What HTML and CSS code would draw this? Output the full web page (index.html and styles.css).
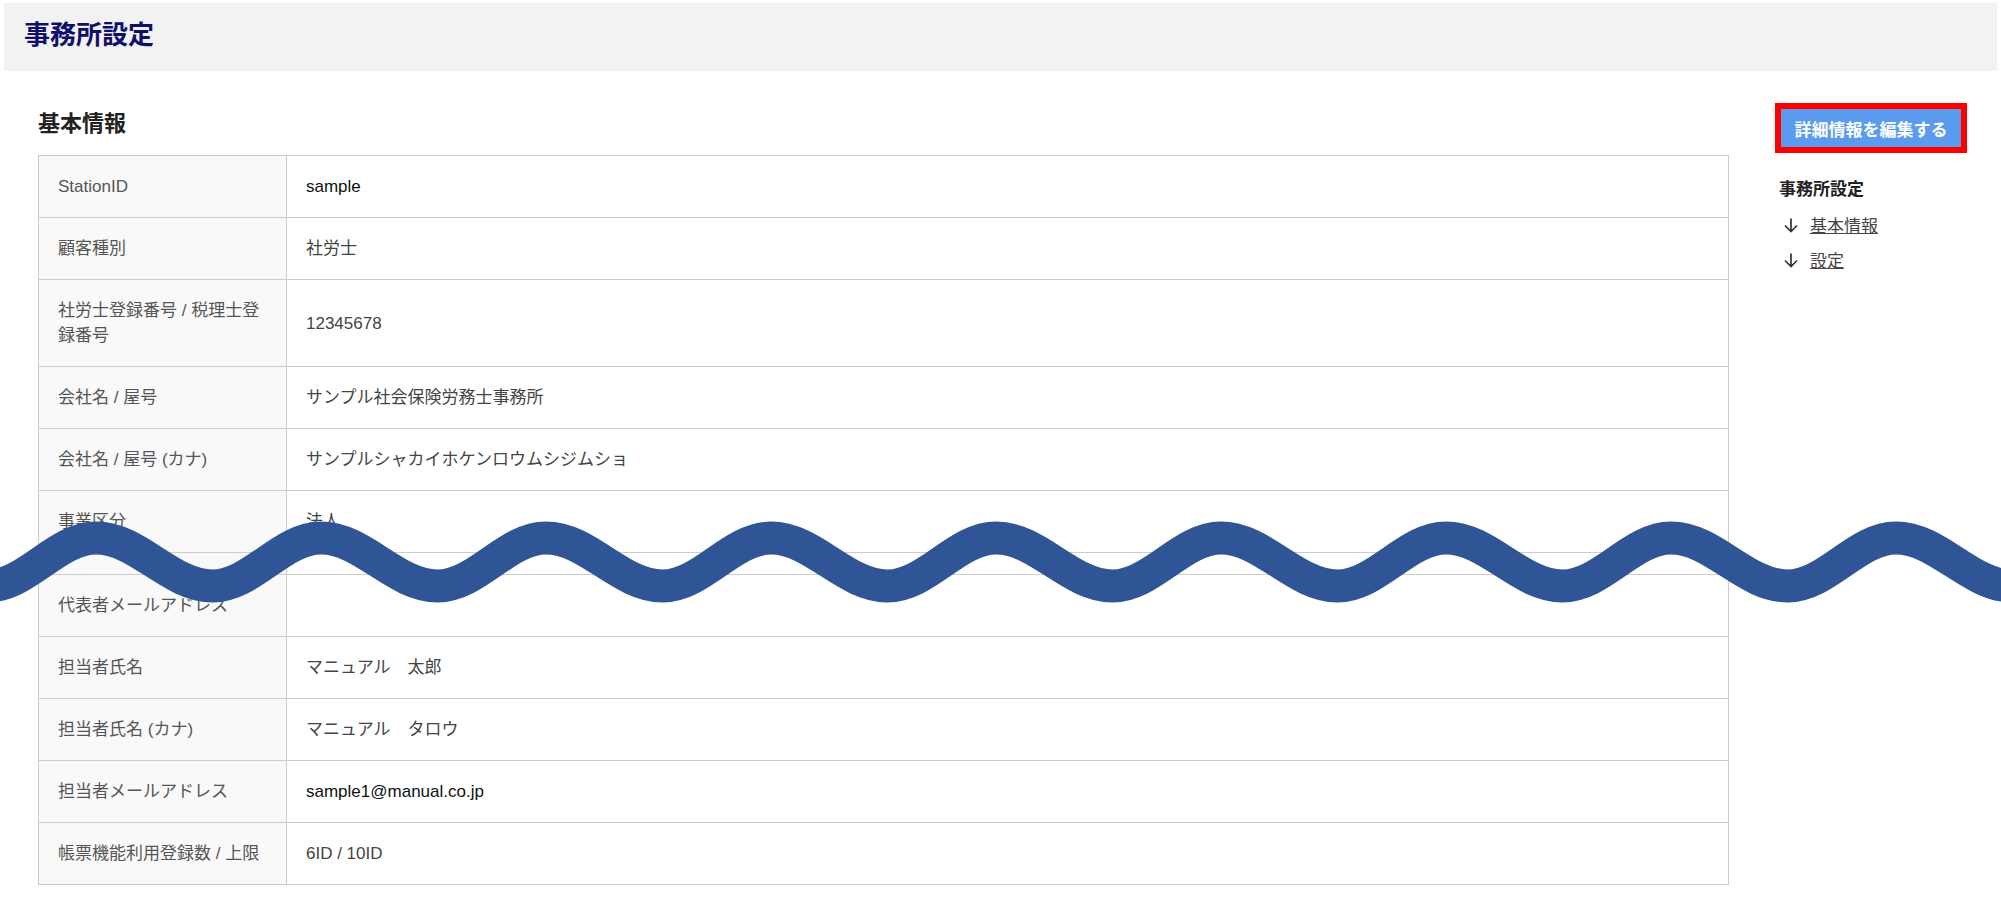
FILE: index.html
```html
<!DOCTYPE html>
<html lang="ja">
<head>
    <meta charset="UTF-8">
    <meta name="viewport" content="width=device-width, initial-scale=1.0">
    <title>事務所設定</title>
    <link rel="stylesheet" href="styles.css">
</head>
<body>
    <div class="page">
        <header class="page-head">
            <h1>事務所設定</h1>
        </header>

        <div class="layout">
            <main class="content">
                <h2 class="section-title" id="basic">基本情報</h2>
                <table class="info">
                    <tr><th>StationID</th><td class="latin">sample</td></tr>
                    <tr><th>顧客種別</th><td>社労士</td></tr>
                    <tr><th>社労士登録番号 / 税理士登録番号</th><td>12345678</td></tr>
                    <tr><th>会社名 / 屋号</th><td>サンプル社会保険労務士事務所</td></tr>
                    <tr><th>会社名 / 屋号 (カナ)</th><td>サンプルシャカイホケンロウムシジムショ</td></tr>
                    <tr><th>事業区分</th><td>法人</td></tr>
                    <tr class="cut"><th></th><td></td></tr>
                    <tr><th>代表者メールアドレス</th><td></td></tr>
                    <tr><th>担当者氏名</th><td>マニュアル　太郎</td></tr>
                    <tr><th>担当者氏名 (カナ)</th><td>マニュアル　タロウ</td></tr>
                    <tr><th>担当者メールアドレス</th><td class="latin">sample1@manual.co.jp</td></tr>
                    <tr><th>帳票機能利用登録数 / 上限</th><td>6ID / 10ID</td></tr>
                </table>
            </main>

            <aside class="side">
                <div class="edit-box">
                    <button type="button" class="edit-btn">詳細情報を編集する</button>
                </div>
                <nav class="toc">
                    <p class="toc-title">事務所設定</p>
                    <a class="toc-link" href="#basic">
                        <svg width="16" height="16" viewBox="0 0 16 16"><path d="M8 1.5V14.5M2 8.5L8 14.5L14 8.5" fill="none" stroke="#333" stroke-width="1.7"/></svg>
                        <span>基本情報</span>
                    </a>
                    <a class="toc-link" href="#settings">
                        <svg width="16" height="16" viewBox="0 0 16 16"><path d="M8 1.5V14.5M2 8.5L8 14.5L14 8.5" fill="none" stroke="#333" stroke-width="1.7"/></svg>
                        <span>設定</span>
                    </a>
                </nav>
            </aside>
        </div>

        <!-- page break marker -->
        <svg class="wave" width="2001" height="120" viewBox="0 0 2001 120">
            <path d="M -129 38 C -86.7 38 -54.8 86 -12.5 86 C 26.9 86 56.6 38 96 38 C 138.3 38 170.2 86 212.5 86 C 251.9 86 281.6 38 321 38 C 363.3 38 395.2 86 437.5 86 C 476.9 86 506.6 38 546 38 C 588.3 38 620.2 86 662.5 86 C 701.9 86 731.6 38 771 38 C 813.3 38 845.2 86 887.5 86 C 926.9 86 956.6 38 996 38 C 1038.3 38 1070.2 86 1112.5 86 C 1151.9 86 1181.6 38 1221 38 C 1263.3 38 1295.2 86 1337.5 86 C 1376.9 86 1406.6 38 1446 38 C 1488.3 38 1520.2 86 1562.5 86 C 1601.9 86 1631.6 38 1671 38 C 1713.3 38 1745.2 86 1787.5 86 C 1826.9 86 1856.6 38 1896 38 C 1938.3 38 1970.2 86 2012.5 86 C 2051.9 86 2081.6 38 2121 38" fill="none" stroke="#2f5597" stroke-width="33"/>
        </svg>
    </div>
</body>
</html>
```

FILE: styles.css
```css
body {
    margin: 0;
    font-family: "Liberation Sans", "Noto Sans CJK JP", sans-serif;
    font-size: 17px;
    color: #333;
    background: #fff;
}
.page {
    position: relative;
    overflow: hidden;
}
.page-head {
    margin: 3px 4px 0;
    height: 68px;
    background: #f2f2f2;
}
.page-head h1 {
    margin: 0;
    padding-left: 20px;
    font-size: 26px;
    line-height: 64px;
    font-weight: bold;
    color: #10106a;
}
.layout {
    display: flex;
    align-items: flex-start;
    gap: 46px;
    padding-left: 38px;
}
.content {
    width: 1691px;
    padding-top: 36px;
}
.section-title {
    margin: 0 0 15px;
    font-size: 22px;
    line-height: 33px;
    color: #222;
}
.info {
    width: 100%;
    table-layout: fixed;
    border-collapse: collapse;
    border: 1px solid #ccc;
}
.info th, .info td {
    border: 1px solid #ccc;
    padding: 18px 19px;
    line-height: 25px;
    text-align: left;
    vertical-align: middle;
    font-weight: normal;
}
.info th {
    width: 248px;
    box-sizing: border-box;
    background: #f9f9f9;
    color: #555;
}
.info td { color: #444; }
.info td.latin { color: #111; }
.info tr.cut th, .info tr.cut td {
    padding: 0;
    height: 21px;
}
.side {
    width: 192px;
    padding-top: 32px;
}
.edit-box {
    border: 6px solid #ff0000;
}
.edit-btn {
    display: block;
    width: 180px;
    height: 38px;
    padding: 0;
    border: 0;
    background: #5b9bef;
    color: #fff;
    font-family: inherit;
    font-size: 17px;
    font-weight: bold;
    cursor: pointer;
}
.toc {
    margin-top: 24px;
    padding-left: 4px;
}
.toc-title {
    margin: 0 0 5px;
    font-weight: bold;
    line-height: 25px;
    color: #222;
}
.toc-link {
    display: flex;
    align-items: center;
    gap: 11px;
    height: 35px;
    padding-left: 4px;
    color: #444;
    text-decoration: none;
}
.toc-link span { text-decoration: underline; }
.wave {
    position: absolute;
    left: 0;
    top: 500px;
}
```
